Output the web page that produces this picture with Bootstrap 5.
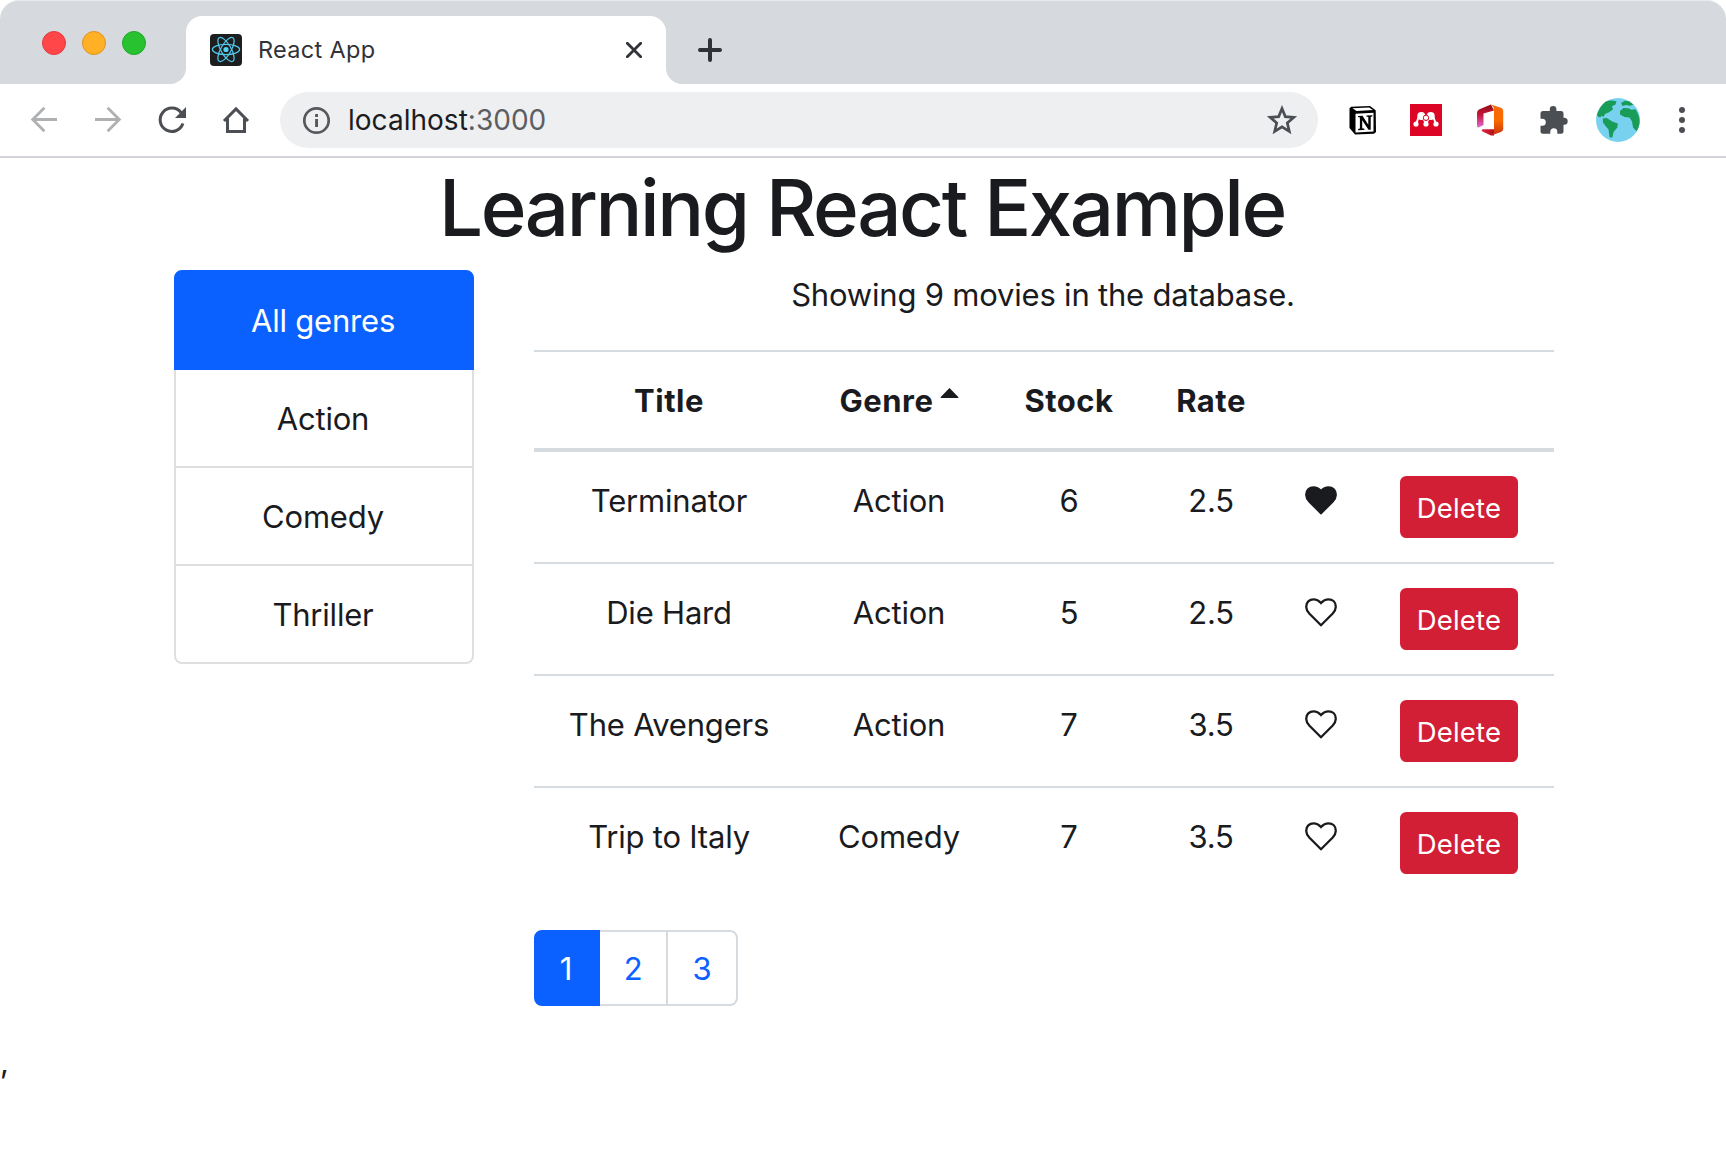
<!DOCTYPE html>
<html lang="en">
<head>
<meta charset="utf-8">
<meta name="viewport" content="width=device-width, initial-scale=1">
<title>React App</title>
<link href="https://cdn.jsdelivr.net/npm/bootstrap@5.3.0/dist/css/bootstrap.min.css" rel="stylesheet">
<style>
  html { font-size: 32px; }
  body {
    --bs-border-width: 2px;
    font-family: Inter, "Liberation Sans", sans-serif;
    font-size: 31px; line-height: 48px; letter-spacing: -0.2px;
    color: #1a1b1e; background: #fff; overflow: hidden;
  }
  svg { display: block; flex: none; }

  /* browser frame */
  .tab-strip { height: 84px; background: #d6d9de; border-top: 1px solid #e8ebec; border-top-left-radius: 19px; border-top-right-radius: 19px; padding-left: 42px; }
  .lights { gap: 16px; height: 24px; margin: 30px 24px 0 0; }
  .light { width: 24px; height: 24px; border-radius: 50%; border: 1px solid; }
  .light-red { background: #ff4649; border-color: #e03a3e; }
  .light-amber { background: #ffb024; border-color: #dd9420; }
  .light-green { background: #28c231; border-color: #1fa62a; }
  .tab-flare { margin-top: auto; }
  .browser-tab { width: 480px; margin-top: 15px; padding: 0 24px; background: #fff; border-radius: 16px 16px 0 0; }
  .tab-title { font-size: 23.5px; line-height: 30px; letter-spacing: .32px; color: #303338; margin: -1px 0 0 16px; }
  .new-tab { margin: 37px 0 0 15px; }
  .toolbar { height: 74px; padding: 0 28px; gap: 32px; border-bottom: 2px solid #d3d4da; color: #4b4e53; }
  .address { height: 56px; border-radius: 28px; background: #eeeff1; margin: 0 -4px; padding: 0 20px; font-size: 28px; letter-spacing: .02px; }
  .host { margin-left: 16px; color: #1b1c1f; }
  .port { color: #5c5e62; }

  /* page */
  .page { width: 1440px; margin-left: 144px; padding: 0 30px; }
  .page h1 { font-size: 78px; line-height: 96px; letter-spacing: -2.42px; margin: 0 0 14px -4px; padding-top: 2px; }
  .page .row { --bs-gutter-x: 60px; }
  .genres { --bs-list-group-border-radius: 8px; --bs-list-group-border-width: 2px; --bs-list-group-border-color: #dfdfdf; --bs-list-group-color: #1a1b1e; --bs-list-group-active-bg: #0b61ff; --bs-list-group-active-border-color: #0b61ff; }
  .genres .list-group-item { line-height: 48px; padding: 25px 33px 23px 31px; }
  .summary { padding-top: 1px; margin: 0 0 31px -2px; }
  .movies { table-layout: fixed; border-collapse: separate; border-spacing: 0; margin-bottom: 32px; --bs-table-color: #1a1b1e; --bs-table-bg: transparent; border-top: 2px solid #d6dbdf; }
  .movies > :not(caption) > * > * { padding: 25px 24px 23px; border: 0; border-bottom: 2px solid #d6dbdf; }
  .movies > thead > tr > th { border-bottom-width: 4px; letter-spacing: .5px; white-space: nowrap; }
  .movies > tbody > tr:last-child > td { border-bottom: 0; }
  .caret { margin: 11px -1px 0 7px; }
  .like { margin: 9px auto 0; }
  .btn-delete { --bs-btn-bg: #d21f35; --bs-btn-border-color: #d21f35; --bs-btn-padding-x: 0; --bs-btn-padding-y: 0; --bs-btn-border-radius: 6.4px; width: 118px; height: 62px; margin: -1px auto 1px; font-size: 27.5px; line-height: 60px; letter-spacing: .2px; display: block; }
  .pager { --bs-pagination-border-width: 2px; --bs-pagination-border-color: #d6dbdf; --bs-pagination-border-radius: 8px; --bs-pagination-color: #0b61ff; --bs-pagination-active-bg: #0b61ff; --bs-pagination-active-border-color: #0b61ff; --bs-pagination-font-size: 31px; margin-bottom: 32px; }
  .pager .page-link { width: 70px; padding: 13px 0 11px; text-align: center; line-height: 48px; }
  .pager .page-item:first-child .page-link { width: 66px; padding-right: 2px; }
  .pager .page-item:last-child .page-link { width: 72px; }
</style>
</head>
<body>
<header>
  <div class="tab-strip d-flex">
    <div class="lights d-flex">
      <span class="light light-red"></span><span class="light light-amber"></span><span class="light light-green"></span>
    </div>
    <!-- curved foot on the left of the tab -->
    <svg class="tab-flare" width="16" height="16" viewBox="0 0 16 16"><path d="M16 0v16H0A16 16 0 0 0 16 0z" fill="#fff"/></svg>
    <div class="browser-tab d-flex align-items-center">
      <svg width="32" height="32" viewBox="0 0 32 32"><rect width="32" height="32" rx="4" fill="#1c1e1f"/><g fill="none" stroke="#53c9ec" stroke-width="1.25"><ellipse cx="16" cy="15.5" rx="13.6" ry="5.1"/><ellipse cx="16" cy="15.5" rx="13.6" ry="5.1" transform="rotate(60 16 15.5)"/><ellipse cx="16" cy="15.5" rx="13.6" ry="5.1" transform="rotate(120 16 15.5)"/></g><circle cx="16" cy="15.5" r="2.6" fill="#53d3f8"/></svg>
      <span class="tab-title">React App</span>
      <svg class="ms-auto" width="16" height="16" viewBox="0 0 16 16"><path d="M1.3 1.3l13.4 13.4M14.7 1.3L1.3 14.7" stroke="#303338" stroke-width="2.8" stroke-linecap="round"/></svg>
    </div>
    <svg class="tab-flare" width="16" height="16" viewBox="0 0 16 16"><path d="M0 0v16h16A16 16 0 0 1 0 0z" fill="#fff"/></svg>
    <svg class="new-tab" width="26" height="24" viewBox="0 0 26 24"><path d="M3 12h20M13 2v20" stroke="#2f3236" stroke-width="4" stroke-linecap="round"/></svg>
  </div>

  <div class="toolbar d-flex align-items-center">
    <svg width="32" height="32" viewBox="0 0 32 32" fill="none" stroke="#afb0b2" stroke-width="2.8"><path d="M29 15.5H5M16.4 3.8L4.7 15.5l11.7 11.7"/></svg>
    <svg width="32" height="32" viewBox="0 0 32 32" fill="none" stroke="#afb0b2" stroke-width="2.8"><path d="M3 15.5h24M15.6 3.8l11.7 11.7-11.7 11.7"/></svg>
    <svg width="32" height="32" viewBox="0 0 32 32"><path d="M26.9 19.6A11.7 11.7 0 1 1 25 8.500" fill="none" stroke="currentColor" stroke-width="3"/><path d="M30 3v11H19z" fill="currentColor"/></svg>
    <svg width="32" height="32" viewBox="0 0 32 32" fill="none" stroke="currentColor" stroke-width="3"><path d="M4 17L16 4.9 28 17M7.500 14.500v13h17v-13"/></svg>
    <div class="address flex-grow-1 d-flex align-items-center">
      <svg width="32" height="32" viewBox="0 0 32 32"><circle cx="16.500" cy="16.500" r="12.200" fill="none" stroke="#56585c" stroke-width="2.700"/><path d="M15.1 10h2.900v2.900h-2.900zM15.1 15h2.900v8h-2.900z" fill="#56585c"/></svg>
      <span class="host">localhost<span class="port">:3000</span></span>
      <svg class="ms-auto" width="32" height="32" viewBox="0 0 32 32"><path d="M16 4.600l3.300 8 8.500.700-6.500 5.600 2 8.400-7.300-4.500-7.300 4.500 2-8.400-6.500-5.600 8.500-.700z" fill="none" stroke="currentColor" stroke-width="2.700"/></svg>
    </div>
    <!-- Notion -->
    <svg width="32" height="32" viewBox="0 0 32 32"><path d="M5 2.700L24 2l5.700 4.300L30 28l-2 1.800L9 30.500 3.500 24V4.500z" fill="#000"/><path d="M6.500 4.300L23 3.500l4 2.600L10.500 7z" fill="#fff"/><path d="M9.500 9.700l18-1v18.700l-18 1z" fill="#fff"/><path d="M12 11.900l4.500-.2 5.800 9v-7.600l-1.900-.5v-1.100l6-.3v1.100l-1.700.7v12.700l-2.200.1-6.300-9.500v8l2.200.5v1.100l-6.300.3v-1.100l1.800-.7V13.600l-1.900-.5z" fill="#000"/></svg>
    <!-- Mendeley -->
    <svg width="32" height="32" viewBox="0 0 32 32"><path d="M0 0h32v32H0z" fill="#dc0526"/><g fill="#fff"><circle cx="11.300" cy="12" r="4"/><circle cx="20.700" cy="12" r="4"/><circle cx="6" cy="20" r="2.600"/><circle cx="16" cy="20" r="2.600"/><circle cx="26" cy="20" r="2.600"/></g><path d="M9 12l-2.500 7M14 15.500l2 4.500 2-4.500M23 12l2.500 7" fill="none" stroke="#fff" stroke-width="2"/><circle cx="16" cy="13.800" r="2.700" fill="#fff" stroke="#dc0526" stroke-width="1"/></svg>
    <!-- Office -->
    <svg width="32" height="32" viewBox="0 0 32 32">
      <defs>
        <linearGradient id="offLeft" x1="0" y1="0" x2="0" y2="1"><stop offset="0" stop-color="#8c0c11"/><stop offset=".45" stop-color="#c9163c"/><stop offset="1" stop-color="#e06ad0"/></linearGradient>
        <linearGradient id="offRight" x1="0" y1="0" x2="0" y2="1"><stop offset="0" stop-color="#f56a0a"/><stop offset=".5" stop-color="#fb6b00"/><stop offset="1" stop-color="#c7330f"/></linearGradient>
        <linearGradient id="offFoot"><stop offset="0" stop-color="#e0263f"/><stop offset="1" stop-color="#b3101c"/></linearGradient>
      </defs>
      <path d="M17 .5L5.500 5.200Q3 6.500 3 9v12.500q0 2.500 2 1.700l4.500-2.200V9.500L20 6.500z" fill="url(#offLeft)"/>
      <path d="M8.500 25.200H20v6.200h-3L8.500 27.400q-1.700-1.300 0-2.200z" fill="url(#offFoot)"/>
      <path d="M17 .4l10 3.400q2.200.9 2.200 3.200v18q0 2.200-2.200 3.100L17 31.500q3-.8 3-4V6q0-3.500-3-5.600z" fill="url(#offRight)"/>
    </svg>
    <!-- extensions -->
    <svg width="32" height="32" viewBox="0 0 32 32"><path d="M5 7h6.800V5.300a3.300 3.300 0 0 1 6.600 0V7H23q2.500 0 2.500 2.500v4.300h.7a3.500 3.500 0 0 1 0 7h-.7v6.400q0 2.500-2.500 2.500h-3.700v-1.900a3.500 3.500 0 0 0-7 0v1.900H5q-2.500 0-2.500-2.500v-5.400h1.800a3.500 3.500 0 0 0 0-7H2.500V9.500Q2.500 7 5 7z" fill="currentColor"/></svg>
    <!-- profile globe -->
    <svg width="44" height="44" viewBox="0 0 44 44" style="margin:0 -6px"><circle cx="22" cy="22" r="22" fill="#78d2ef"/><g fill="#189c57"><path d="M10.500 3.300C13.500 1.800 17 2.500 20.500 3.200l-1 3.300-3.500 1.800 1 3.200-4.500 3-3.500 1.500-1.500 3-1.700-1.200L4 19.500C3 19 1.500 18.500 1 17 3 11 6 6 10.500 3.300z"/><path d="M6.800 20.500l4-.5 5.500 3.500 5.500 2-.5 4-3.700 4.500-1.500 6-2.600-1-1-7.500-3-3.500-2.500-3.500z"/><path d="M25 5l4-2.200 4.500.7 4 3.200-3.500 1-4-.8-3.500 1z"/><path d="M24 13l3.500-3 5 .2 3 1.600 4-.5c3 5 4.500 9 4 14-.5 3-1.500 5.700-3 8L37 29.500l-1-6-2.500-4-5-.5L24 16.500z"/></g></svg>
    <svg width="32" height="32" viewBox="0 0 32 32"><g fill="currentColor"><circle cx="16" cy="6" r="3"/><circle cx="16" cy="16" r="3"/><circle cx="16" cy="26" r="3"/></g></svg>
  </div>
</header>

<svg width="0" height="0" class="position-absolute"><defs><path id="heartShape" d="M16 27.200L4.500 15.700C2.600 13.700 1.200 11.500 1.200 8.700 1.200 4.200 4.300 1.300 8.500 1.300c3 0 5.500 1.500 7.500 3.800 2-2.300 4.500-3.800 7.500-3.800 4.200 0 7.300 2.900 7.300 7.400 0 2.800-1.400 5-3.300 7z"/></defs></svg>

<main class="page">
  <h1 class="text-center fw-medium">Learning React Example</h1>
  <div class="row">
    <div class="col-3">
      <ul class="list-group genres text-center">
        <li class="list-group-item active">All genres</li>
        <li class="list-group-item">Action</li>
        <li class="list-group-item">Comedy</li>
        <li class="list-group-item">Thriller</li>
      </ul>
    </div>
    <div class="col">
      <p class="summary text-center">Showing 9 movies in the database.</p>
      <table class="table movies text-center">
        <colgroup><col style="width:270px"><col style="width:190px"><col style="width:150px"><col style="width:134px"><col style="width:86px"><col style="width:190px"></colgroup>
        <thead>
          <tr><th>Title</th><th><span class="d-inline-flex">Genre<svg class="caret" width="19" height="10" viewBox="0 0 19 10"><path d="M9.500 0L18.500 9.200q0 .8-.8.800H1.300q-.8 0-.8-.8z" fill="#1a1b1e"/></svg></span></th><th>Stock</th><th>Rate</th><th></th><th></th></tr>
        </thead>
        <tbody>
          <tr><td>Terminator</td><td>Action</td><td>6</td><td>2.5</td><td class="px-0"><svg class="like" width="32" height="29" viewBox="0 0 32 29"><use href="#heartShape" fill="#1a1b1e" stroke="#1a1b1e" stroke-width="2.3"/></svg></td><td><button class="btn btn-danger btn-delete">Delete</button></td></tr>
          <tr><td>Die Hard</td><td>Action</td><td>5</td><td>2.5</td><td class="px-0"><svg class="like" width="32" height="29" viewBox="0 0 32 29"><use href="#heartShape" fill="none" stroke="#1a1b1e" stroke-width="2.3"/></svg></td><td><button class="btn btn-danger btn-delete">Delete</button></td></tr>
          <tr><td class="px-0">The Avengers</td><td>Action</td><td>7</td><td>3.5</td><td class="px-0"><svg class="like" width="32" height="29" viewBox="0 0 32 29"><use href="#heartShape" fill="none" stroke="#1a1b1e" stroke-width="2.3"/></svg></td><td><button class="btn btn-danger btn-delete">Delete</button></td></tr>
          <tr><td>Trip to Italy</td><td>Comedy</td><td>7</td><td>3.5</td><td class="px-0"><svg class="like" width="32" height="29" viewBox="0 0 32 29"><use href="#heartShape" fill="none" stroke="#1a1b1e" stroke-width="2.3"/></svg></td><td><button class="btn btn-danger btn-delete">Delete</button></td></tr>
        </tbody>
      </table>
      <nav>
        <ul class="pagination pager">
          <li class="page-item active"><a class="page-link" href="#">1</a></li>
          <li class="page-item"><a class="page-link" href="#">2</a></li>
          <li class="page-item"><a class="page-link" href="#">3</a></li>
        </ul>
      </nav>
    </div>
  </div>
</main>
<div>,</div>
<script src="https://cdn.jsdelivr.net/npm/bootstrap@5.3.0/dist/js/bootstrap.bundle.min.js"></script>
</body>
</html>
